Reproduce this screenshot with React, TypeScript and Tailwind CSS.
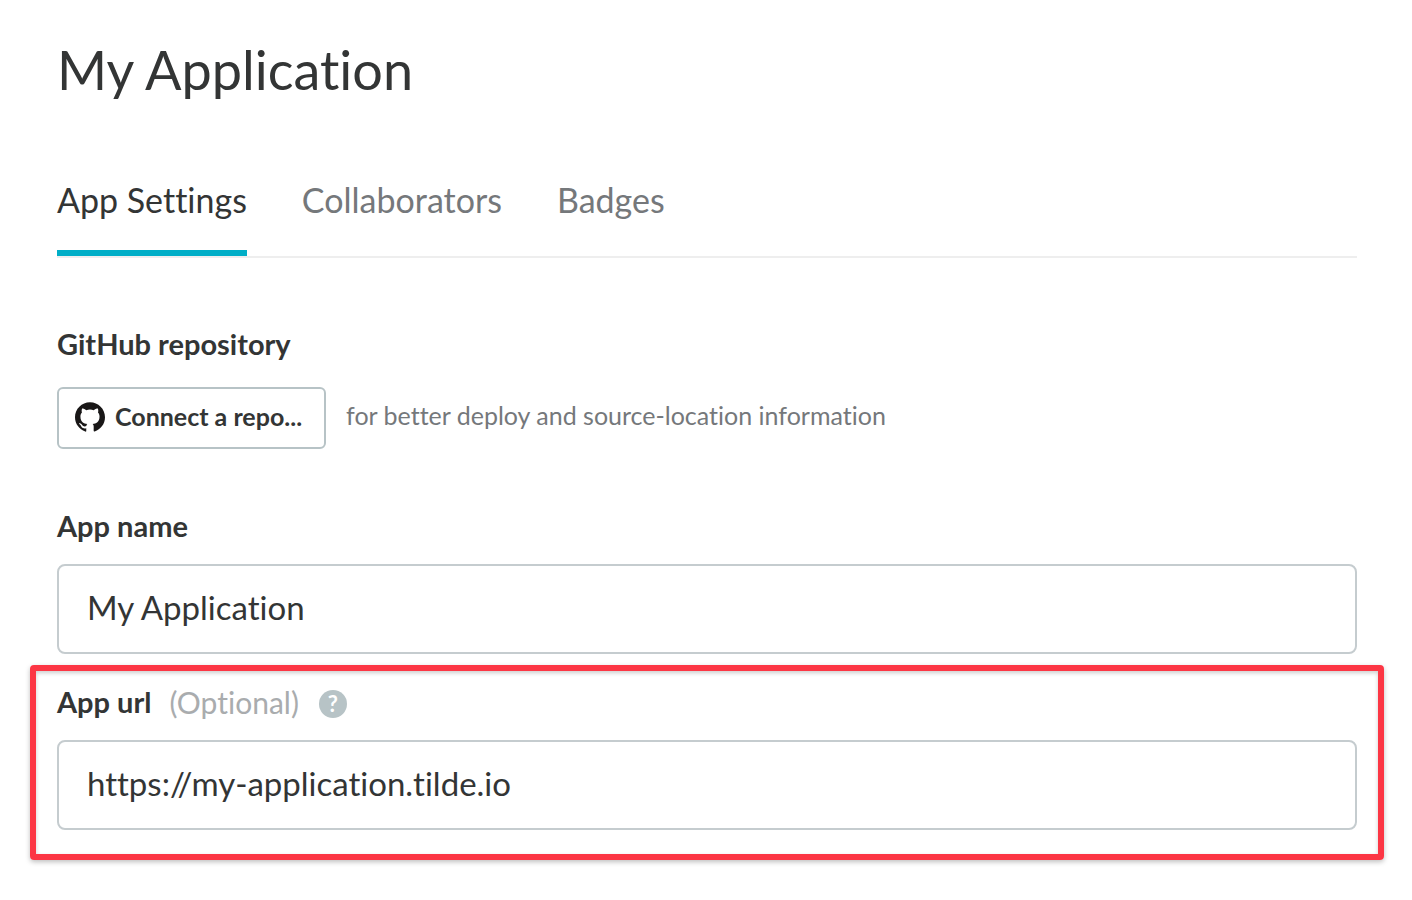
import { useState } from "react";
import type { ReactNode } from "react";
import { SiGithub } from "react-icons/si";

const TABS = ["App Settings", "Collaborators", "Badges"];

function Label({ htmlFor, children }: { htmlFor: string; children: ReactNode }) {
  return (
    <label htmlFor={htmlFor} className="text-[29px] leading-9 font-bold">
      {children}
    </label>
  );
}

function TextField({ id, initial }: { id: string; initial: string }) {
  const [value, setValue] = useState(initial);
  return (
    <input
      id={id}
      type="text"
      value={value}
      onChange={(e) => setValue(e.target.value)}
      className="mt-5 block h-[90px] w-full rounded-lg border-2 border-[#c5cccf] bg-white px-7 pb-1 text-[33px] text-[#333535] outline-none focus:border-[#00aec7]"
    />
  );
}

export default function App() {
  const [active, setActive] = useState(TABS[0]);

  return (
    <main className="bg-white pt-[38px] pr-[55px] pb-10 pl-[57px] font-['Lato',sans-serif] text-[#333535] [font-variant-ligatures:none]">
      <h1 className="text-[54px] leading-[64px]">My Application</h1>

      <nav className="mt-[78px] flex gap-[55px] border-b-2 border-[#eeeeee]">
        {TABS.map((tab) => (
          <a
            key={tab}
            href="#"
            onClick={(e) => {
              e.preventDefault();
              setActive(tab);
            }}
            aria-current={tab === active ? "page" : undefined}
            className={
              tab === active
                ? "border-b-6 border-[#00aec7] pb-[30px] text-[34px] leading-10"
                : "border-b-6 border-transparent pb-[30px] text-[34px] leading-10 text-[#75787b]"
            }
          >
            {tab}
          </a>
        ))}
      </nav>

      <section className="mt-[68px]">
        <h2 className="text-[29px] leading-9 font-bold">GitHub repository</h2>
        <div className="mt-[25px] flex items-center gap-5">
          <button
            type="button"
            className="flex h-[62px] items-center gap-2.5 rounded-md border-2 border-[#b7c3c6] bg-white pr-[22px] pb-0.5 pl-4 text-[25px] font-bold"
          >
            <SiGithub className="size-[30px] text-[#191717]" aria-hidden="true" />
            Connect a repo...
          </button>
          <p className="pb-1.5 text-[25px] leading-8 text-[#75787b]">
            for better deploy and source-location information
          </p>
        </div>
      </section>

      <section className="mt-[59px]">
        <div className="flex">
          <Label htmlFor="app-name">App name</Label>
        </div>
        <TextField id="app-name" initial="My Application" />
      </section>

      <section className="-mx-[27px] mt-[11px] rounded-sm border-6 border-[#fc3644] px-[21px] pt-[13px] pb-6 shadow-[0_2px_5px_rgba(0,0,0,0.25),inset_0_2px_4px_rgba(0,0,0,0.2)]">
        <div className="flex items-center">
          <Label htmlFor="app-url">App url</Label>
          <span className="ml-[18px] text-[30px] leading-9 text-[#a9acae]">(Optional)</span>
          <button
            type="button"
            aria-label="About the app url"
            className="mt-1 ml-5 flex size-7 items-center justify-center rounded-full bg-[#b7c3c6] text-[22px] leading-7 font-bold text-white"
          >
            ?
          </button>
        </div>
        <TextField id="app-url" initial="https://my-application.tilde.io" />
      </section>
    </main>
  );
}
